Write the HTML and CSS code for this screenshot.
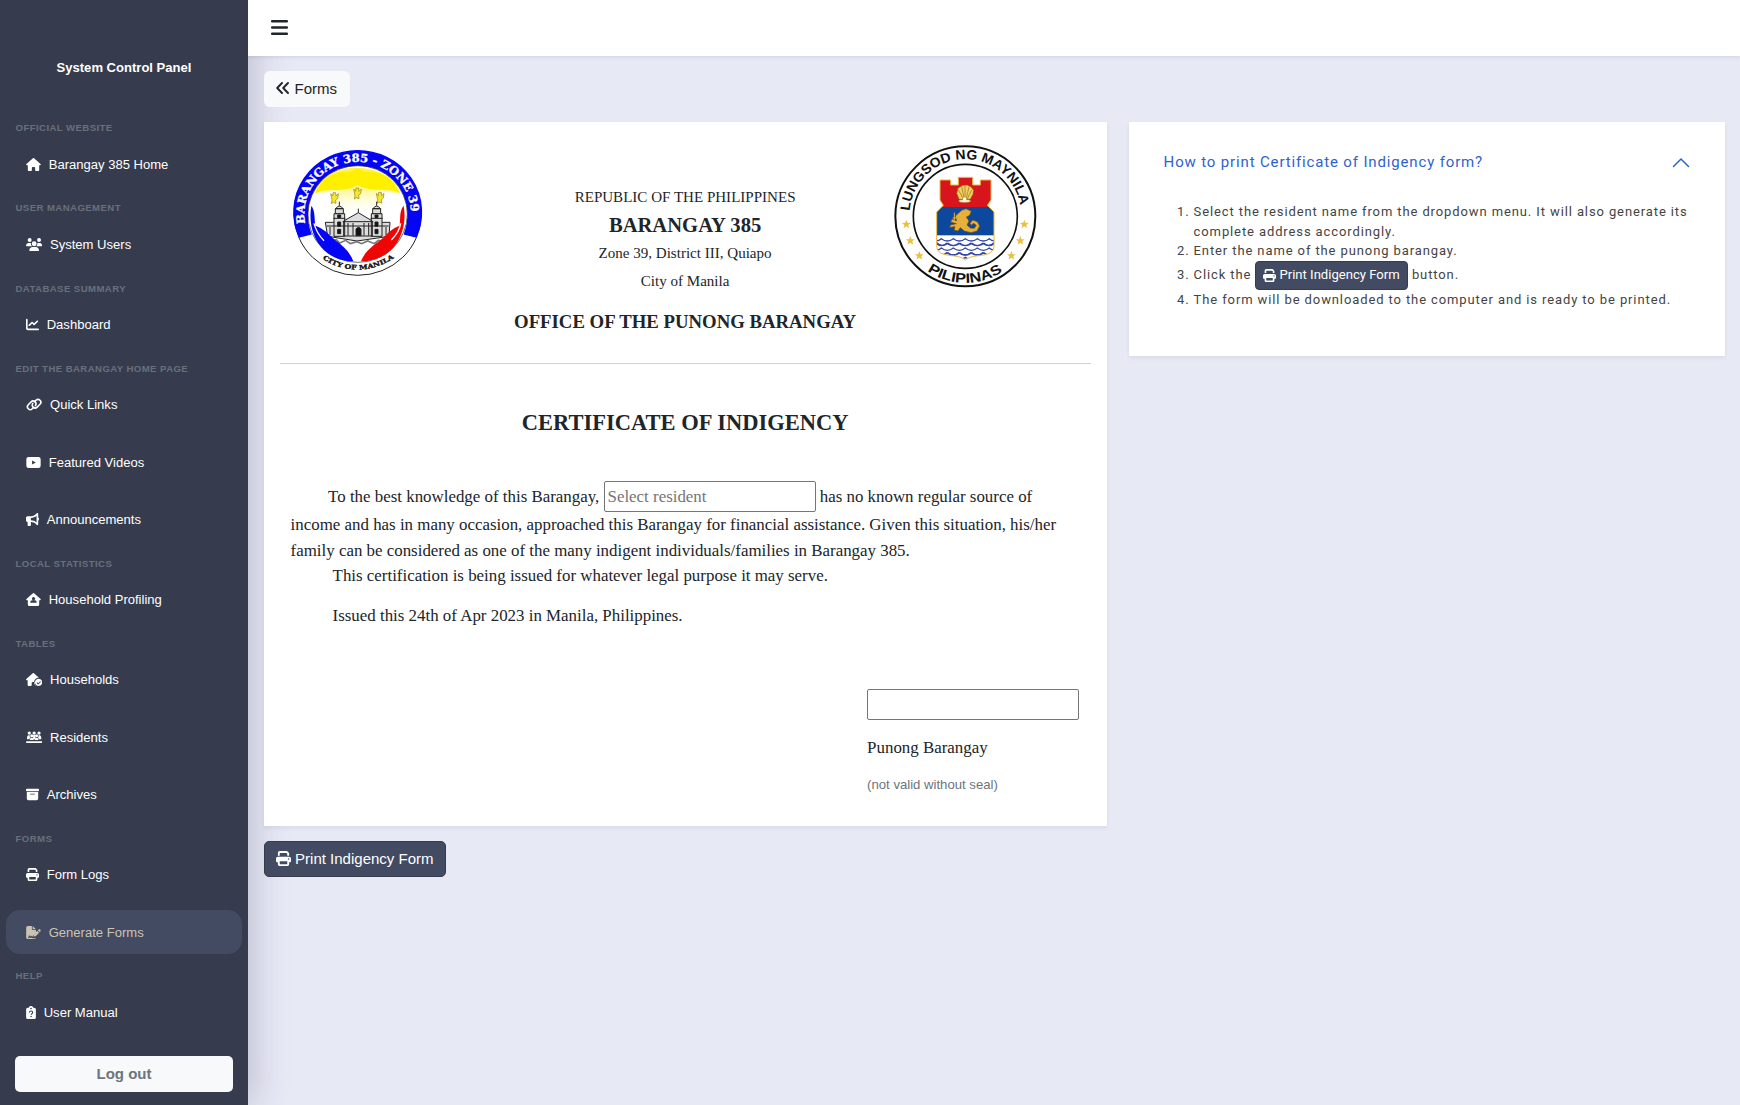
FILE: index.html
```html
<!DOCTYPE html>
<html lang="en">
<head>
<meta charset="utf-8">
<title>Certificate of Indigency</title>
<link rel="stylesheet" href="styles.css">
</head>
<body>
<svg class="defs" aria-hidden="true">
  <symbol id="print" viewBox="0 0 512 512"><path d="M128 0C92.7 0 64 28.7 64 64v96h64V64H354.7L384 93.3V160h64V93.3c0-17-6.7-33.3-18.7-45.3L400 18.7C388 6.7 371.7 0 354.7 0H128zM384 352v32 64H128V384 368 352H384zm64 32h32c17.7 0 32-14.3 32-32V256c0-35.3-28.7-64-64-64H64c-35.3 0-64 28.7-64 64v96c0 17.7 14.3 32 32 32H64v64c0 35.3 28.7 64 64 64H384c35.3 0 64-28.7 64-64V384zM432 248a24 24 0 1 1 0 48 24 24 0 1 1 0-48z"/></symbol>
</svg>
<div class="app">
  <aside class="sidebar">
    <div class="brand">System Control Panel</div>
    <nav>
      <h6>OFFICIAL WEBSITE</h6>
      <a class="item"><svg class="w576" viewBox="0 0 576 512"><path d="M575.8 255.5c0 18-15 32.1-32 32.1h-32l.7 160.2c0 2.7-.2 5.4-.5 8.1V472c0 22.1-17.9 40-40 40H392c-22.1 0-40-17.9-40-40V384c0-17.7-14.3-32-32-32H256c-17.7 0-32 14.3-32 32v88c0 22.1-17.9 40-40 40H104c-22.1 0-40-17.9-40-40V287.6H32c-18 0-32-14-32-32.1c0-9 3-17 10-24L266.4 8c7-7 15-8 22-8s15 2 21 7L564.8 231.5c8 7 12 15 11 24z"/></svg><span>Barangay 385 Home</span></a>
      <h6>USER MANAGEMENT</h6>
      <a class="item"><svg class="w640" viewBox="0 0 640 512"><circle cx="144" cy="80" r="78"/><circle cx="512" cy="80" r="78"/><circle cx="320" cy="224" r="96"/><path d="M0 298c0-58 48-106 107-106h42c17 0 33 4 47 10-10 62 16 94 44 118H22c-12 0-22-10-22-22zM400 320c30-26 54-60 44-118 14-6 30-10 47-10h42c59 0 107 48 107 106 0 12-10 22-22 22zM128 485c0-73 60-133 133-133h118c73 0 133 60 133 133 0 15-12 27-27 27H155c-15 0-27-12-27-27z"/></svg><span>System Users</span></a>
      <h6>DATABASE SUMMARY</h6>
      <a class="item"><svg class="w512" viewBox="0 0 512 512"><path d="M64 64c0-17.7-14.3-32-32-32S0 46.3 0 64V400c0 44.2 35.8 80 80 80H480c17.7 0 32-14.3 32-32s-14.3-32-32-32H80c-8.8 0-16-7.2-16-16V64zm406.6 86.6c12.5-12.5 12.5-32.8 0-45.3s-32.8-12.5-45.3 0L320 210.7l-57.4-57.4c-12.5-12.5-32.8-12.5-45.3 0l-112 112c-12.5 12.5-12.5 32.8 0 45.3s32.8 12.5 45.3 0L240 221.3l57.4 57.4c12.5 12.5 32.8 12.5 45.3 0l128-128z"/></svg><span>Dashboard</span></a>
      <h6>EDIT THE BARANGAY HOME PAGE</h6>
      <a class="item"><svg class="w640" viewBox="0 0 640 512"><g fill="none" stroke="currentColor" stroke-width="62" stroke-linecap="round"><path d="M304 368l-56 56c-44 44-115 44-159 0s-44-115 0-159l112-112c44-44 115-44 159 0 40 40 44 101 12 146"/><path d="M336 144l56-56c44-44 115-44 159 0s44 115 0 159L439 359c-44 44-115 44-159 0-40-40-44-101-12-146"/></g></svg><span>Quick Links</span></a>
      <a class="item"><svg class="w576" viewBox="0 0 576 512"><path fill-rule="evenodd" d="M96 40h384q90 0 90 90v252q0 90-90 90H96q-90 0-90-90V130q0-90 90-90zM232 174v164l146-82z"/></svg><span>Featured Videos</span></a>
      <a class="item"><svg class="w512" viewBox="0 0 512 512"><path d="M480 32c0-12.9-7.8-24.6-19.8-29.6s-25.7-2.2-34.9 6.9L381.7 53c-48 48-113.1 75-181 75H64c-35.3 0-64 28.7-64 64v96c0 35.3 28.7 64 64 64v128c0 17.7 14.3 32 32 32h64c17.7 0 32-14.3 32-32V352h8.7c67.9 0 133 27 181 75l43.6 43.6c9.2 9.2 22.9 11.9 34.9 6.9s19.8-16.6 19.8-29.6V300.4c18.6-8.8 32-32.5 32-60.4s-13.4-51.6-32-60.4V32zm-64 76.7V371.3C357.2 317.8 280.5 288 200.7 288H192V192h8.7c79.8 0 156.5-29.8 215.3-83.3z"/></svg><span>Announcements</span></a>
      <h6>LOCAL STATISTICS</h6>
      <a class="item"><svg class="w576" viewBox="0 0 576 512"><path fill-rule="evenodd" d="M266 8q22-16 44 0l256 224c22 22 4 56-22 56h-32v160q0 64-64 64H128q-64 0-64-64V288H32c-28 0-44-34-22-56zM288 160a64 64 0 1 0 .1 0zM240 288c-44 0-80 36-80 80 0 9 7 16 16 16h224c9 0 16-7 16-16 0-44-36-80-80-80z"/></svg><span>Household Profiling</span></a>
      <h6>TABLES</h6>
      <a class="item"><svg class="w640" viewBox="0 0 640 512"><path fill-rule="evenodd" d="M266 8q22-16 44 0l210 184c-90-16-200 54-200 176 0 56 24 106 62 144h-30V384q0-32-32-32h-64q-32 0-32 32v88q0 40-40 40h-80q-40 0-40-40V288H32c-28 0-44-34-22-56z"/><path fill-rule="evenodd" d="M496 224a144 144 0 1 0 .1 0zM564 323l23 23-107 107-63-63 23-23 40 40z"/></svg><span>Households</span></a>
      <a class="item"><svg class="w640" viewBox="0 0 640 512"><circle cx="128" cy="80" r="64"/><circle cx="320" cy="80" r="64"/><circle cx="512" cy="80" r="64"/><circle cx="225" cy="190" r="60"/><circle cx="415" cy="190" r="60"/><path d="M40 320v-50c0-70 40-110 100-110 0 70 20 90 40 100-30 16-44 34-46 60zM600 320v-50c0-70-40-110-100-110 0 70-20 90-40 100 30 16 44 34 46 60zM262 160h116c-30 30-30 70 0 100-18 14-28 30-28 60h-60c0-30-10-46-28-60 30-30 30-70 0-100zM150 350c0-50 30-80 75-80s75 30 75 80zM340 350c0-50 30-80 75-80s75 30 75 80z"/><rect y="400" width="640" height="72" rx="32"/></svg><span>Residents</span></a>
      <a class="item"><svg class="w512" viewBox="0 0 512 512"><path d="M32 32H480c17.7 0 32 14.3 32 32V96c0 17.7-14.3 32-32 32H32C14.3 128 0 113.7 0 96V64C0 46.3 14.3 32 32 32zm0 128H480V416c0 35.3-28.7 64-64 64H96c-35.3 0-64-28.7-64-64V160zm128 80c0 8.8 7.2 16 16 16H336c8.8 0 16-7.2 16-16s-7.2-16-16-16H176c-8.8 0-16 7.2-16 16z"/></svg><span>Archives</span></a>
      <h6>FORMS</h6>
      <a class="item"><svg class="w512"><use href="#print"/></svg><span>Form Logs</span></a>
      <a class="item active"><svg class="w576" viewBox="0 0 576 512"><path fill-rule="evenodd" d="M64 0h160v128q0 32 32 32h128v102L274 372c-8 8-14 18-17 28l-6 24c-12-4-18-8-24-22-8-26-40-26-52-4l-14 34-10-36c-8-26-46-26-54 0l-18 62c-3 12 4 22 14 22h14c12 0 18-8 20-16l10-30 10 28c5 16 28 22 38 6l14-28c10 24 28 40 58 40h110l17-4v-36l0 8q0 64-64 64H64q-64 0-64-64V64Q0 0 64 0zM256 0l128 128H256z"/><path d="M549 139c-16-16-41-16-57 0l-30 30 71 71 30-30c16-16 16-41 0-57zM311 320l129-129 71 71-129 129c-4 4-9 7-15 9l-60 15c-12 2-22-8-19-19l15-60c1-6 4-12 8-16z"/></svg><span>Generate Forms</span></a>
      <h6>HELP</h6>
      <a class="item"><svg class="w384" viewBox="0 0 384 512"><path fill-rule="evenodd" d="M192 0c42 0 77 27 90 64h38q64 0 64 64v320q0 64-64 64H64q-64 0-64-64V128q0-64 64-64h38C115 27 150 0 192 0zM192 64a30 30 0 1 0 .1 0z"/><path d="M126 254c4-38 32-54 66-54 38 0 68 24 68 60 0 44-66 44-66 88" fill="none" stroke="#363c4e" stroke-width="42"/><circle cx="194" cy="412" r="30" fill="#363c4e"/></svg><span>User Manual</span></a>
    </nav>
    <button class="logout">Log out</button>
  </aside>
  <div class="main">
    <header class="topbar"><svg viewBox="0 0 16 16"><path d="M1 2.1h14M1 8h14M1 13.9h14" stroke="currentColor" stroke-width="2.2" stroke-linecap="round"/></svg></header>
    <main class="content">
      <button class="back"><svg viewBox="0 0 13 12"><path d="M6 1L1.2 6 6 11M12 1L7.2 6l4.8 5" fill="none" stroke="currentColor" stroke-width="1.9" stroke-linecap="round" stroke-linejoin="round"/></svg>Forms</button>
      <div class="columns">
        <section class="card certificate">
          <div class="letterhead">
            <svg class="seal-left" viewBox="0 0 480 435">
              <defs>
                <path id="arcTop" d="M77 253A160 156 0 1 1 389 253"/>
                <path id="arcBottom" d="M100 330A182 175 0 0 0 366 330"/>
                <linearGradient id="glow" x1="0" y1="0" x2="0" y2="1"><stop offset="0" stop-color="#ffee00"/><stop offset=".45" stop-color="#fff36a"/><stop offset="1" stop-color="#fff" stop-opacity="0"/></linearGradient>
              </defs>
              <ellipse cx="233" cy="219" rx="191" ry="184" fill="#fff" stroke="#222" stroke-width="3"/>
              <path d="M58 287A191 184 0 1 1 408 287L374 279A151 147 0 1 0 92 279Z" fill="#0505f5" stroke="#0505f5" stroke-width="5"/>
              <ellipse cx="233" cy="219" rx="149" ry="145" fill="#fff" stroke="#222" stroke-width="2"/>
              <path d="M104 158C120 105 175 78 233 80S345 105 361 158L290 150 330 225H135L175 150Z" fill="url(#glow)" opacity=".7"/>
              <path d="M104 158C125 110 165 88 210 92L233 82 256 92C301 88 340 110 361 158 325 135 280 160 233 132 190 160 140 135 104 158Z" fill="#fff000"/>
              <g fill="#f7e52e" stroke="#8d841b" stroke-width="2"><path id="angel" d="M152 158l6 7 1-10h8l1 10 7-7-2 14-6 5 1 10-8-3-6 4 2-11z"/><use href="#angel" x="69" y="-14"/><use href="#angel" x="137" y="-1"/></g>
              <g fill="#ddd" stroke="#222" stroke-width="3">
                <path d="M136 244h194l-3 42-96 14-88-14z"/>
                <path d="M191 240l44-25 42 25v45h-86zM162 286v-68h32v68zM274 286v-68h32v68z"/>
                <path d="M166 218v-15h24v15zM278 218v-15h24v15zM167 203q11-16 22 0zM279 203q11-16 22 0zM178 194v-12M290 194v-12M235 215v-12"/>
                <path d="M188 242h92M160 232h36M272 232h36M140 255h186M204 246v38M219 246v38M252 246v38M266 246v38M150 258v24M318 258v24" fill="none"/>
                <path d="M228 284v-20q7-10 15 0v20zM173 230v-8h9v8zM285 230v-8h9v8zM173 256v-13h9v13zM285 256v-13h9v13zM173 278v-13h9v13zM285 278v-13h9v13z" fill="#111"/>
              </g>
              <path d="M145 292l10 8 14-4 10 10 18-8 14 10 20-6 14 6 18-8 20 8 12-10 14 2 12-8" fill="none" stroke="#777" stroke-width="5"/>
              <path d="M94 194c12 15 9 42 12 60 26 8 42 28 60 44 22 16 44 35 54 63-42 0-82-18-106-56-20-30-27-72-20-111z" fill="#0505f5"/>
              <path d="M371 194c-14 15-9 42-12 60-26 8-40 28-58 44-22 16-48 35-58 63 42 0 84-18 108-56 20-30 27-72 20-111z" fill="#f00505"/>
              <path d="M102 247q8 30 30 52M362 247q-4 26-28 50" fill="none" stroke="#fff" stroke-width="4"/>
              <text class="t-385"><textPath href="#arcTop" textLength="520" lengthAdjust="spacingAndGlyphs" startOffset="6">BARANGAY 385 - ZONE 39</textPath></text>
              <text class="t-city"><textPath href="#arcBottom" textLength="228" lengthAdjust="spacingAndGlyphs" startOffset="36">CITY OF MANILA</textPath></text>
            </svg>
            <div class="heading">
              <p>REPUBLIC OF THE PHILIPPINES</p>
              <p class="brgy">BARANGAY 385</p>
              <p>Zone 39, District III, Quiapo</p>
              <p>City of Manila</p>
              <p class="office">OFFICE OF THE PUNONG BARANGAY</p>
            </div>
            <svg class="seal-right" viewBox="0 0 480 480">
              <defs>
                <path id="mTop" d="M75 255A167 167 0 1 1 407 255"/>
                <path id="mBottom" d="M68 340A199 199 0 0 0 414 340"/>
                <path id="star" d="M0-14L3.6-4.5 13.5-4.3 5.8 2 8.5 11.5 0 6-8.5 11.5-5.8 2-13.5-4.3-3.6-4.5z"/>
                <clipPath id="shield"><path d="M165 132h32v15h23v-23h43v23h23v-15h32v60l-11 16 20 20v100c0 22-16 27-38 30-24 3-36 4-48 14-12-10-24-11-48-14-22-3-38-8-38-30V228l20-20-10-16z"/></clipPath>
              </defs>
              <circle cx="241" cy="241" r="210" fill="#fff" stroke="#111" stroke-width="6"/>
              <circle cx="241" cy="241" r="156" fill="#fff" stroke="#111" stroke-width="5"/>
              <g clip-path="url(#shield)">
                <rect x="150" y="115" width="182" height="100" fill="#d8141c"/>
                <rect x="150" y="213" width="182" height="87" fill="#0d489f"/>
                <rect x="150" y="298" width="182" height="82" fill="#fff"/>
                <g fill="none" stroke="#3345a5" stroke-width="4">
                  <path id="wave" d="M137 304q16 18 32 4q18 14 36 0q18 14 36 0q18 14 36 0q18 14 36 0q16 14 32-4"/>
                  <use href="#wave" x="16" y="14"/><use href="#wave" x="-16" y="14"/><use href="#wave" y="28"/><use href="#wave" x="16" y="42"/><use href="#wave" x="-16" y="42"/><use href="#wave" y="56"/>
                </g>
              </g>
              <path d="M165 132h32v15h23v-23h43v23h23v-15h32v60l-11 16 20 20v100c0 22-16 27-38 30-24 3-36 4-48 14-12-10-24-11-48-14-22-3-38-8-38-30V228l20-20-10-16z" fill="none" stroke="#e9b83b" stroke-width="3"/>
              <path d="M222 190l-7-18 4-16 14-8 14-1 12 6 7 10-2 12-8 15z" fill="#f2cf63" stroke="#7a5a10" stroke-width="2"/>
              <path d="M236 190l-16-28M238 190l-8-38M240 190v-40M243 190l9-37M246 190l14-28" stroke="#9c6b13" stroke-width="2"/>
              <ellipse cx="239" cy="195" rx="18" ry="5" fill="#f8ead0" stroke="#9c6b13" stroke-width="1.5"/><circle cx="239" cy="189" r="5" fill="#fff"/>
              <path d="M230 223l13-5 16 8-5 12-10 5 8 12-6 12 10 9 12 1 6-9-9-6-6 6-4-6 8-10 14 5 7 13-8 15-18 5-20-5-12-10-7 10-12-3 3-10-16 2 2-7 18-4-17-5 4-9 14 5-4-14z" fill="#e6b03a" stroke="#6b4d16" stroke-width="2"/>
              <path d="M208 230v22M203 246h12" stroke="#e6b03a" stroke-width="3"/>
              <g fill="#ebc040"><use href="#star" x="64" y="265"/><use href="#star" x="76" y="314"/><use href="#star" x="103" y="359"/><use href="#star" x="418" y="265"/><use href="#star" x="406" y="314"/><use href="#star" x="379" y="359"/></g>
              <text class="t-lungsod"><textPath href="#mTop" textLength="484" lengthAdjust="spacingAndGlyphs" startOffset="30">LUNGSOD NG MAYNILA</textPath></text>
              <text class="t-lungsod"><textPath href="#mBottom" textLength="240" lengthAdjust="spacingAndGlyphs" startOffset="88">PILIPINAS</textPath></text>
            </svg>
          </div>
          <hr>
          <h1>CERTIFICATE OF INDIGENCY</h1>
          <div class="body">
            <p class="first">To the best knowledge of this Barangay, <input type="text" placeholder="Select resident"> has no known regular source of income and has in many occasion, approached this Barangay for financial assistance. Given this situation, his/her family can be considered as one of the many indigent individuals/families in Barangay 385.</p>
            <p class="indent">This certification is being issued for whatever legal purpose it may serve.</p>
            <p class="indent issued">Issued this 24th of Apr 2023 in Manila, Philippines.</p>
          </div>
          <div class="sign">
            <input type="text">
            <p>Punong Barangay</p>
            <small>(not valid without seal)</small>
          </div>
        </section>
        <section class="card help">
          <div class="help-title"><span>How to print Certificate of Indigency form?</span><svg viewBox="0 0 18 11"><path d="M1.5 9.5L9 2l7.5 7.5" fill="none" stroke="#2b68c4" stroke-width="1.5" stroke-linecap="round"/></svg></div>
          <ol>
            <li>Select the resident name from the dropdown menu. It will also generate its complete address accordingly.</li>
            <li>Enter the name of the punong barangay.</li>
            <li>Click the <span class="chip"><svg><use href="#print"/></svg>Print Indigency Form</span> button.</li>
            <li>The form will be downloaded to the computer and is ready to be printed.</li>
          </ol>
        </section>
      </div>
      <button class="print"><svg><use href="#print"/></svg>Print Indigency Form</button>
    </main>
  </div>
</div>
</body>
</html>
```
FILE: styles.css
```css
* { box-sizing: border-box; }
body { margin: 0; background: #e7e9f5; color: #212529; font-family: "Liberation Sans", Arial, sans-serif; }
p, h1, h6 { margin: 0; }
svg { fill: currentColor; flex: none; }
button { border: 0; font-family: inherit; margin: 0; }
.defs { display: none; }
.app { display: flex; height: 1105px; overflow: hidden; }

.sidebar { width: 248px; background: #363c4e; box-shadow: 0 0 38px rgba(49, 44, 86, .3); color: #fff; display: flex; flex-direction: column; }
.brand { font-weight: bold; font-size: 13.05px; line-height: 20px; text-align: center; padding-top: 58px; height: 112.5px; flex: none; }
.sidebar h6 { height: 22.9px; padding: 7.7px 0 0 15.5px; font-size: 9.6px; line-height: 15.2px; letter-spacing: .42px; color: #69707b; white-space: nowrap; }
nav { display: flex; flex-direction: column; }
.item { display: flex; align-items: center; height: 44.33px; margin: 6.5px 6px; padding-left: 20px; border-radius: 14px; font-size: 13.05px; }
.item svg { height: 13px; margin-right: 7.7px; }
.w384 { width: 10px; }
.w512 { width: 13px; }
.w576 { width: 15px; }
.w640 { width: 16.3px; }
.active { background: #424b61; color: #cbc4b4; }
.logout { height: 36px; flex: none; margin: 15px 15px 0; border-radius: 5px; background: #f8f9fa; color: #6c757d; font-size: 15px; font-weight: bold; }

.main { flex: 1; display: flex; flex-direction: column; }
.topbar { height: 56px; background: #fff; padding: 19px 23px; box-shadow: 0 1px 4px rgba(40, 45, 90, .13); }
.topbar svg { width: 17px; height: 17px; display: block; }
.content { padding: 15px 15px 0 15.6px; display: flex; flex-direction: column; align-items: flex-start; }
.back { height: 36px; width: 86px; background: #f8f9fa; border-radius: 6px; font-size: 15px; display: flex; align-items: center; gap: 6px; padding: 0 0 2px 12px; color: #212529; }
.back svg { width: 13px; height: 12px; }
.columns { display: flex; gap: 22px; align-items: flex-start; align-self: stretch; margin: 15px 0; }
.card { background: #fff; box-shadow: 0 2px 4px rgba(40, 45, 90, .08); }

.certificate { width: 843px; height: 704px; padding-top: 13px; font-family: "Liberation Serif", "Times New Roman", serif; }
.letterhead { display: grid; grid-template-columns: 1fr auto 1fr; padding: 0 62px 0 16px; align-items: start; }
.seal-left { width: 160px; height: 145px; margin-top: 6px; }
.seal-right { width: 160px; height: 160px; justify-self: end; margin-top: 1px; }
.heading { padding: 47.5px 0 0; margin: 0 -23px 0 23px; text-align: center; font-size: 15.05px; line-height: 28.3px; white-space: nowrap; }
.heading .brgy { font-size: 20.6px; font-weight: bold; }
.heading .office { font-size: 18.75px; font-weight: bold; margin-top: 12.5px; line-height: 28px; }
.t-385 { font: bold 34px "DejaVu Serif", serif; fill: #fff; stroke: #fff; }
.t-city { font: bold 19px "DejaVu Serif", serif; fill: #111; stroke: #111; }
.t-lungsod { font: bold 41px "Liberation Sans", sans-serif; fill: #111; }
hr { border: 0; height: 1px; background: #cfd1d3; margin: 27px 16px 0; }
h1 { font-size: 22.5px; line-height: 28px; text-align: center; margin-top: 44.5px; }
.body { padding: 0 24px 0 27px; margin-top: 44.5px; font-size: 16.9px; line-height: 25.5px; }
.first { text-indent: 37.5px; }
.indent { text-indent: 42px; }
.issued { margin-top: 14.5px; }
input { width: 212px; height: 31px; font: inherit; border: 1px solid #767676; border-radius: 2px; padding: 1px 3px; text-indent: 0; }
input::placeholder { color: #757575; }
.sign { display: flex; flex-direction: column; width: 212px; margin: 60.5px 0 0 603.5px; font-size: 16.9px; line-height: 25.5px; }
.sign p { margin-top: 15px; }
.sign small { font: 13.15px/20px "Liberation Sans", sans-serif; color: #6c757d; margin-top: 14px; }

.help { flex: 1; height: 234px; padding: 28px 30px 0 35px; font-family: Roboto, sans-serif; }
.help-title { display: flex; align-items: center; justify-content: space-between; height: 24px; font-size: 15px; letter-spacing: .85px; color: #2f62cf; }
.help-title svg { width: 18px; height: 11px; margin-right: 5px; }
ol { margin: 28px 0 0; padding: 0 0 0 30px; font-size: 13px; line-height: 19.6px; letter-spacing: .89px; color: #444; }
.chip { display: inline-flex; align-items: center; vertical-align: middle; height: 29px; padding: 0 7px; gap: 3px; border-radius: 4px; background: #424b61; color: #fff; font-size: 13.1px; letter-spacing: 0; border: 1px solid #363c4e; }
.chip svg { width: 13px; height: 13px; }
.print { display: flex; align-items: center; gap: 4px; height: 36px; padding: 0 11.5px 2px; border-radius: 5px; border: 1px solid #363c4e; background: #424b61; color: #fff; font-size: 15px; }
.print svg { width: 15px; height: 15px; }
```
